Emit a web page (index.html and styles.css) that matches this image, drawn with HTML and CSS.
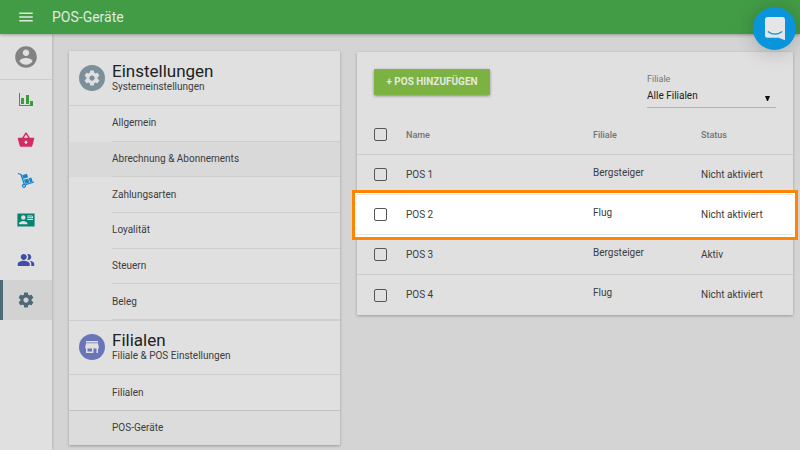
FILE: index.html
```html
<!DOCTYPE html>
<html lang="de">
<head>
<meta charset="utf-8">
<meta name="viewport" content="width=device-width, initial-scale=1">
<title>POS-Geräte</title>
<link rel="stylesheet" href="styles.css">
</head>
<body>
<header class="topbar">
  <button class="menu-button" type="button" aria-label="Menü">
    <svg viewBox="0 0 24 24" width="18" height="18"><path d="M3 18h18v-2H3v2zm0-5h18v-2H3v2zm0-7v2h18V6H3z"/></svg>
  </button>
  <h1 class="topbar-title">POS-Geräte</h1>
</header>

<div class="layout">
  <nav class="rail" aria-label="Hauptmenü">
    <a class="rail-account" href="#" aria-label="Konto">
      <svg viewBox="0 0 24 24" width="26" height="26"><path d="M12 2C6.480 2 2 6.480 2 12s4.480 10 10 10 10-4.480 10-10S17.520 2 12 2zm0 3c1.660 0 3 1.340 3 3s-1.340 3-3 3-3-1.340-3-3 1.340-3 3-3zm0 14.200c-2.500 0-4.710-1.280-6-3.220.030-1.990 4-3.080 6-3.080 1.990 0 5.970 1.090 6 3.080-1.290 1.940-3.500 3.220-6 3.220z"/></svg>
    </a>
    <a class="rail-item reports" href="#" aria-label="Berichte">
      <svg viewBox="0 0 16 16" width="16" height="16"><path d="M1 1h1v12h13v1H1zM3 6h3v6H3zM8 3h3v9H8zM12 9h3v4h-3z"/></svg>
    </a>
    <a class="rail-item goods" href="#" aria-label="Artikel">
      <svg viewBox="0 0 24 24" width="18" height="18"><path d="M17.210 9l-4.380-6.560c-.190-.280-.510-.420-.830-.420-.320 0-.640.140-.830.430L6.790 9H2c-.550 0-1 .450-1 1 0 .090.010.180.040.270l2.540 9.270c.230.840 1 1.460 1.920 1.460h13c.920 0 1.690-.620 1.930-1.460l2.540-9.270L23 10c0-.550-.450-1-1-1h-4.790zM9 9l3-4.400L15 9H9zm3 8c-1.100 0-2-.900-2-2s.900-2 2-2 2 .900 2 2-.900 2-2 2z"/></svg>
    </a>
    <a class="rail-item stock" href="#" aria-label="Lager">
      <svg viewBox="0 0 18 18" width="18" height="18"><path fill="none" stroke="currentColor" stroke-width="1.300" d="M1 2.500 4 3.500 7.300 13.200"/><path fill="none" stroke="currentColor" stroke-width="1.300" d="M8.500 13.600 17 11"/><circle cx="7" cy="14.800" r="1.500" fill="none" stroke="currentColor" stroke-width="1.300"/><path d="M5.100 4.300 9.900 2.800l1.200 3.500-4.800 1.500zM6.900 8.700 11.100 7.400l1.400 4.100-4.200 1.300zM11.700 7.200 14.300 6.400l1.400 4.200-2.600.8z"/></svg>
    </a>
    <a class="rail-item staff" href="#" aria-label="Mitarbeiter">
      <svg viewBox="0 0 18 14" width="18" height="14"><path fill-rule="evenodd" d="M1 .5h16q.6 0 .6.600v11.800q0 .600-.6.600H1q-.6 0-.6-.6V1.100Q.4.500 1 .500zM6.300 2.300a2.200 2.200 0 1 0 0 4.400 2.200 2.200 0 0 0 0-4.400zM2 11.300h8.500v-.8c0-1.500-2.700-2.400-4.200-2.400S2 9 2 10.500zM10.300 2.500v4.600H16V3.500l-1-1z"/><path d="M10.300 3.500H15v.7h-4.700zM10.300 5.200H16v.7h-5.700z"/></svg>
    </a>
    <a class="rail-item customers" href="#" aria-label="Kunden">
      <svg viewBox="0 0 24 24" width="18" height="18"><path d="M16.670 13.130C18.040 14.060 19 15.320 19 17v3h4v-3c0-2.180-3.570-3.470-6.330-3.870zM15 12c2.210 0 4-1.790 4-4s-1.790-4-4-4c-.470 0-.910.100-1.330.240C14.500 5.270 15 6.580 15 8s-.500 2.730-1.330 3.760c.420.140.860.240 1.330.240zM9 12c2.210 0 4-1.790 4-4s-1.790-4-4-4-4 1.790-4 4 1.790 4 4 4zM9 13c-2.670 0-8 1.340-8 4v3h16v-3c0-2.660-5.330-4-8-4z"/></svg>
    </a>
    <a class="rail-item settings active" href="#" aria-label="Einstellungen" aria-current="page">
      <svg viewBox="0 0 24 24" width="18" height="18"><path d="M19.430 12.980c.040-.320.070-.640.070-.980s-.030-.660-.070-.980l2.110-1.650c.190-.150.240-.420.120-.640l-2-3.460c-.120-.220-.390-.300-.610-.220l-2.490 1c-.520-.400-1.080-.730-1.690-.980l-.380-2.650C14.460 2.180 14.250 2 14 2h-4c-.250 0-.460.180-.490.420l-.380 2.650c-.610.250-1.170.590-1.690.980l-2.490-1c-.230-.090-.490 0-.610.220l-2 3.460c-.130.220-.070.490.120.640l2.110 1.650c-.040.320-.070.650-.070.980s.030.660.070.980l-2.110 1.650c-.190.150-.240.420-.120.640l2 3.460c.120.220.390.300.610.220l2.490-1c.520.400 1.080.730 1.690.980l.380 2.650c.030.240.240.420.490.420h4c.250 0 .460-.180.490-.420l.380-2.650c.610-.250 1.170-.590 1.690-.980l2.490 1c.230.090.490 0 .610-.220l2-3.460c.120-.220.070-.490-.120-.640l-2.110-1.650zM12 15.500c-1.930 0-3.500-1.570-3.500-3.500s1.570-3.500 3.500-3.500 3.500 1.570 3.500 3.500-1.570 3.500-3.500 3.500z"/></svg>
    </a>
  </nav>

  <main class="content">
    <aside class="card settings-menu">
      <section>
        <div class="group-head">
          <span class="group-icon system">
            <svg viewBox="0 0 24 24" width="18" height="18"><path d="M19.430 12.980c.040-.320.070-.640.070-.980s-.030-.660-.070-.980l2.110-1.650c.190-.150.240-.420.120-.640l-2-3.460c-.120-.220-.390-.300-.610-.220l-2.490 1c-.520-.400-1.080-.730-1.690-.980l-.380-2.650C14.460 2.180 14.250 2 14 2h-4c-.250 0-.460.180-.490.420l-.380 2.650c-.610.250-1.170.590-1.690.980l-2.490-1c-.230-.090-.490 0-.610.220l-2 3.460c-.130.220-.070.490.120.640l2.110 1.650c-.040.320-.070.650-.070.980s.030.660.070.980l-2.110 1.650c-.190.150-.240.420-.120.640l2 3.460c.120.220.390.300.610.220l2.490-1c.520.400 1.080.730 1.690.980l.380 2.650c.030.240.240.420.490.420h4c.250 0 .460-.180.490-.420l.380-2.650c.610-.250 1.170-.590 1.690-.980l2.490 1c.230.090.490 0 .610-.220l2-3.460c.120-.220.070-.490-.120-.640l-2.110-1.650zM12 15.500c-1.930 0-3.500-1.570-3.500-3.500s1.570-3.500 3.500-3.500 3.500 1.570 3.500 3.500-1.570 3.500-3.500 3.500z"/></svg>
          </span>
          <div>
            <h2 class="group-title">Einstellungen</h2>
            <p class="group-sub">Systemeinstellungen</p>
          </div>
        </div>
        <ul class="menu-list system-list">
          <li><a href="#">Allgemein</a></li>
          <li class="hovered"><a href="#">Abrechnung &amp; Abonnements</a></li>
          <li><a href="#">Zahlungsarten</a></li>
          <li><a href="#">Loyalität</a></li>
          <li><a href="#">Steuern</a></li>
          <li><a href="#">Beleg</a></li>
        </ul>
      </section>
      <section class="stores">
        <div class="group-head">
          <span class="group-icon store">
            <svg viewBox="0 0 24 24" width="18" height="18"><path d="M20 4H4v2h16V4zm1 10v-2l-1-5H4l-1 5v2h1v6h10v-6h4v6h2v-6h1zm-9 4H6v-4h6v4z"/></svg>
          </span>
          <div>
            <h2 class="group-title">Filialen</h2>
            <p class="group-sub">Filiale &amp; POS Einstellungen</p>
          </div>
        </div>
        <ul class="menu-list store-list">
          <li><a href="#">Filialen</a></li>
          <li class="selected"><a href="#" aria-current="page">POS-Geräte</a></li>
        </ul>
      </section>
    </aside>

    <section class="card devices">
      <div class="toolbar">
        <button class="add-button" type="button">+ POS HINZUFÜGEN</button>
        <div class="filter">
          <label for="store">Filiale</label>
          <div class="select-wrap">
            <select id="store"><option>Alle Filialen</option></select>
            <svg class="caret" viewBox="0 0 5 5" width="5" height="5"><path d="M0 0h5L3 5H2z"/></svg>
          </div>
        </div>
      </div>
      <table class="device-table">
        <thead>
          <tr><th class="check"><input type="checkbox" aria-label="Alle auswählen"></th><th>Name</th><th class="store-col">Filiale</th><th class="status-col">Status</th></tr>
        </thead>
        <tbody>
          <tr><td class="check"><input type="checkbox" aria-label="POS 1"></td><td>POS 1</td><td class="store-col">Bergsteiger</td><td>Nicht aktiviert</td></tr>
          <tr class="highlight"><td class="check"><input type="checkbox" aria-label="POS 2"></td><td>POS 2</td><td class="store-col">Flug</td><td>Nicht aktiviert</td></tr>
          <tr><td class="check"><input type="checkbox" aria-label="POS 3"></td><td>POS 3</td><td class="store-col">Bergsteiger</td><td>Aktiv</td></tr>
          <tr><td class="check"><input type="checkbox" aria-label="POS 4"></td><td>POS 4</td><td class="store-col">Flug</td><td>Nicht aktiviert</td></tr>
        </tbody>
      </table>
    </section>
  </main>
</div>

<button class="chat" type="button" aria-label="Chat öffnen">
  <svg viewBox="0 0 20 23" width="20" height="23"><path fill="#e3e5e6" d="M2.500 0h15A2.500 2.500 0 0 1 20 2.500V23c-2-.3-4-1.500-6-2.300H2.500A2.500 2.500 0 0 1 0 18.200V2.500A2.500 2.500 0 0 1 2.500 0z"/><path fill="none" stroke="#0a94dc" stroke-width="1.300" stroke-linecap="round" d="M3.300 14.800c4 3.200 9.400 3.200 13.400 0"/></svg>
</button>
</body>
</html>
```

FILE: styles.css
```css
* {
  box-sizing: border-box;
}

body {
  margin: 0;
  min-height: 100vh;
  display: flex;
  flex-direction: column;
  background: #d4d4d4;
  color: #3c3c3c;
  font: 10px/14px Roboto, "Liberation Sans", sans-serif;
}

h1, h2, p, ul {
  margin: 0;
  padding: 0;
}

a {
  color: inherit;
  text-decoration: none;
}

svg {
  display: block;
  fill: currentColor;
}

button {
  border: 0;
  padding: 0;
  font-family: inherit;
  cursor: pointer;
}

.topbar {
  position: relative;
  z-index: 1;
  display: flex;
  align-items: center;
  height: 34px;
  background: #429c46;
  color: #e1e8e1;
  box-shadow: 0 1px 3px rgba(0, 0, 0, 0.3);
}

.menu-button {
  width: 52px;
  display: flex;
  justify-content: center;
  background: none;
  color: inherit;
}

.topbar-title {
  font-size: 14px;
  line-height: 20px;
  font-weight: 400;
}

.layout {
  flex: 1;
  display: flex;
}

.rail {
  flex: 0 0 52px;
  background: #e0e0e0;
  box-shadow: 0 0 3px rgba(0, 0, 0, 0.25);
}

.rail-account,
.rail-item {
  display: flex;
  align-items: center;
  justify-content: center;
  height: 40px;
}

.rail-account {
  height: 46px;
  border-bottom: 1px solid #cbcbcb;
  color: #828282;
}

.reports { color: #389e3c; }
.goods { color: #d32b64; }
.stock { color: #1684c8; }
.staff { color: #078373; }
.customers { color: #3f4da8; }
.settings { color: #4d6876; }

.rail-item.active {
  background: #d2d2d2;
  border-left: 3px solid #4d6876;
  padding-right: 3px;
}

.content {
  flex: 1;
  display: grid;
  grid-template-columns: 271fr 436fr;
  align-items: start;
  gap: 17px;
  padding: 17px 7px 5px 17px;
}

.card {
  background: #e0e0e0;
  border-radius: 1px;
  box-shadow: 0 1px 3px rgba(0, 0, 0, 0.28);
}

.group-head {
  display: flex;
  align-items: center;
  gap: 7px;
  height: 55px;
  padding-left: 10px;
  border-bottom: 1px solid #cdcdcd;
}

.group-icon {
  width: 26px;
  height: 26px;
  display: flex;
  align-items: center;
  justify-content: center;
  border-radius: 50%;
  color: #e0e0e0;
}

.system { background: #7b909b; }
.store { background: #6a75b9; }

.group-title {
  color: #212121;
  font-size: 17px;
  line-height: 18px;
  font-weight: 400;
}

.group-sub {
  line-height: 14px;
}

.menu-list {
  display: grid;
  grid-auto-rows: 1fr;
  list-style: none;
}

.menu-list li {
  display: flex;
  padding-left: 43px;
}

.menu-list a {
  flex: 1;
  display: flex;
  align-items: center;
  border-bottom: 1px solid #cdcdcd;
}

.system-list {
  height: 214px;
}

.store-list {
  height: 70px;
}

.menu-list .hovered {
  background: #d9d9d9;
}

.stores {
  border-top: 1px solid #cdcdcd;
}

.stores .group-head {
  height: 54px;
  padding-bottom: 2px;
}

.store-list a {
  border-bottom: 0;
}

.menu-list .selected {
  background: #dcdcdc;
  border-top: 1px solid #c2c2c2;
}

.devices {
  isolation: isolate;
  margin-top: 1px;
}

.toolbar {
  display: flex;
  justify-content: space-between;
  align-items: flex-start;
  padding: 17px 17px 0;
}

.add-button {
  width: 116px;
  height: 26px;
  border-radius: 1px;
  background: #7bb241;
  color: #e4e9df;
  font-size: 10px;
  line-height: 14px;
  font-weight: 700;
  box-shadow: 0 1px 3px rgba(0, 0, 0, 0.4);
}

.filter {
  width: 129px;
  padding-top: 3px;
}

.filter label {
  display: block;
  color: #777;
  font-size: 9px;
  line-height: 14px;
}

.select-wrap {
  position: relative;
  border-bottom: 1px solid #b4b4b4;
}

.select-wrap select {
  width: 100%;
  height: 21px;
  padding: 0 0 1px;
  border: 0;
  appearance: none;
  background: none;
  color: #212121;
  font: inherit;
}

.caret {
  position: absolute;
  right: 6px;
  top: 10px;
  color: #111;
  pointer-events: none;
}

.device-table {
  width: 100%;
  table-layout: fixed;
  border-collapse: separate;
  border-spacing: 0;
  margin-top: 7px;
}

.device-table th,
.device-table td {
  height: 40px;
  padding: 0;
  text-align: left;
  border-bottom: 1px solid rgba(0, 0, 0, 0.09);
}

.device-table th {
  color: #737373;
  font-size: 9px;
  font-weight: 500;
}

.device-table tbody tr:last-child td {
  border-bottom: 0;
}

.device-table .check {
  width: 49px;
  padding-left: 17px;
}

.device-table .store-col {
  width: 108px;
}

.device-table td.store-col {
  padding-bottom: 4px;
}

.device-table .status-col {
  width: 92px;
}

.device-table input {
  display: block;
  width: 13px;
  height: 13px;
  margin: 0;
  appearance: none;
  border: 1px solid #555;
  border-radius: 2px;
}

/* White spotlight with an orange frame, drawn behind the row's content */
.highlight {
  position: relative;
}

.highlight .check::before {
  content: "";
  position: absolute;
  z-index: -1;
  inset: -5px;
  border: 3px solid #ff8400;
  background: #fff;
}

.chat {
  position: fixed;
  z-index: 2;
  top: 7px;
  right: 4px;
  width: 43px;
  height: 43px;
  display: flex;
  align-items: center;
  justify-content: center;
  border-radius: 50%;
  background: #0a94dc;
  box-shadow: 0 2px 20px rgba(0, 0, 0, 0.22);
}
```
